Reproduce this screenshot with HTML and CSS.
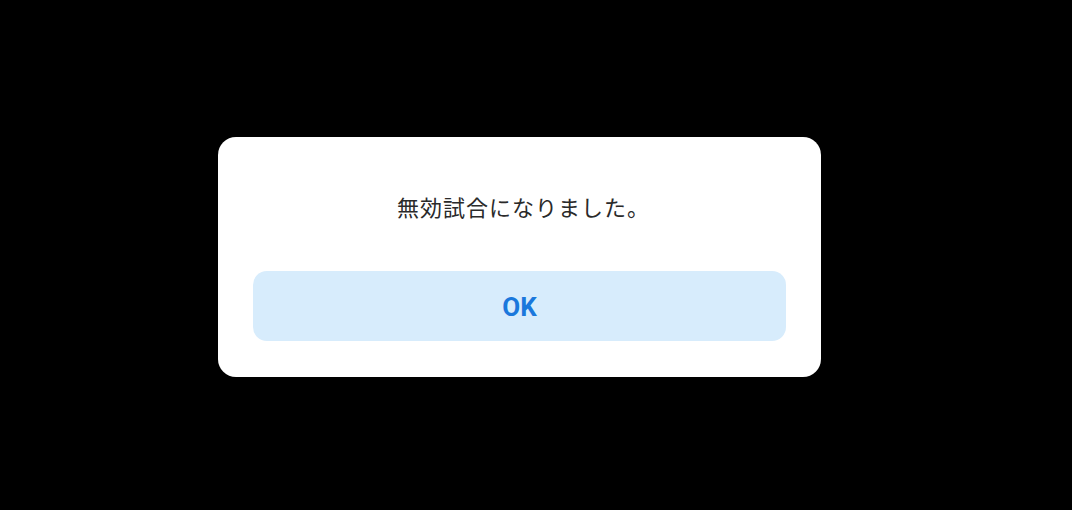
FILE: index.html
```html
<!DOCTYPE html>
<html lang="ja">
<head>
<meta charset="utf-8">
<link rel="stylesheet" href="styles.css">
</head>
<body>
<div class="screen">
  <div class="dialog">
    <p class="message">無効試合になりました。</p>
    <button class="ok">OK</button>
  </div>
</div>
</body>
</html>
```
FILE: styles.css
```css
html, body {
  margin: 0;
  padding: 0;
  background: #000;
}
.screen {
  width: 1072px;
  height: 510px;
  display: flex;
  align-items: flex-start;
  justify-content: flex-start;
  padding: 137px 0 0 218px;
  box-sizing: border-box;
}
.dialog {
  width: 603px;
  height: 240px;
  background: #fff;
  border-radius: 18px;
  box-sizing: border-box;
  padding: 54px 35px 0 35px;
  display: flex;
  flex-direction: column;
  align-items: stretch;
}
.message {
  margin: 0;
  height: 30px;
  line-height: 30px;
  text-align: center;
  font-family: "Noto Sans CJK JP", "Noto Sans", sans-serif;
  font-size: 22px;
  color: #2a2a2a;
  letter-spacing: 1px;
  padding-left: 8px;
}
.ok {
  margin-top: 50px;
  height: 70px;
  border: none;
  border-radius: 14px;
  background: #d7ecfc;
  color: #1a78dc;
  font-family: Roboto, "Liberation Sans", sans-serif;
  font-weight: 700;
  font-size: 26px;
  padding: 0;
  padding-top: 2px;
}
```
